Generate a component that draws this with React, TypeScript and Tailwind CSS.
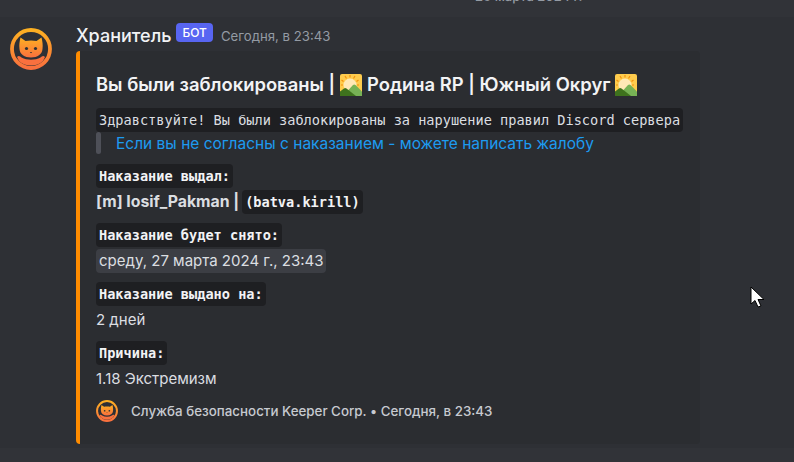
function CatAvatar({ size, id }: { size: number; id: string }) {
  return (
    <svg width={size} height={size} viewBox="0 0 42 42" className="shrink-0">
      <defs>
        <linearGradient id={id} x1="0" y1="0" x2="0" y2="1">
          <stop offset="0" stopColor="#fdb022" />
          <stop offset="1" stopColor="#f9703e" />
        </linearGradient>
      </defs>
      <circle cx="21" cy="21" r="19" fill="#2e3035" stroke={`url(#${id})`} strokeWidth="3.8" />
      <path d="M10.500 9.500 L15.500 13 C18.500 12.200 23.500 12.200 26.500 13 L31.500 9.500 C32.500 13.500 33 17 32.500 21 C32 26.500 27.500 29.500 21 29.500 C14.500 29.500 10 26.500 9.500 21 C9 17 9.500 13.500 10.500 9.500 Z" fill={`url(#${id})`} />
      <path d="M7 29 C8.500 27.500 10 28 11.500 29.500 C17 32.500 25 32.500 30.500 29.500 C32 28 33.500 27.500 35 29 L33 33 C27 39 15 39 9 33 Z" fill="#f9703e" />
      <circle cx="16.500" cy="20.500" r="1.600" fill="#2e3035" />
      <circle cx="25.500" cy="20.500" r="1.600" fill="#2e3035" />
      <path d="M19.800 24 H22.200 L21 25.300 Z" fill="#2e3035" />
    </svg>
  );
}

function SunriseEmoji() {
  return (
    <svg width="22" height="22" viewBox="0 0 22 22" className="inline-block shrink-0">
      <rect width="22" height="22" rx="2" fill="#ffcc4d" />
      <g stroke="#f4900c" strokeWidth="1.200">
        <path d="M10 1 V3.500 M5 2 L6.500 4.500 M15 2 L13.500 4.500 M1.500 6 L3.500 7.500 M18.500 6 L16.500 7.500 M1 11 H3 M19 11 H17" />
      </g>
      <circle cx="10" cy="11" r="6.500" fill="#ffe8b6" />
      <path d="M3 22 L13 11 C14 10.300 14.500 10.300 15.500 11 L22 17.500 V22 Z" fill="#77b255" />
      <path d="M0 17.500 L4 14.500 C5 13.800 5.500 13.800 6.500 14.500 L16 22 H0 Z" fill="#3e721d" />
    </svg>
  );
}

function Code({ children, bold }: { children: string; bold?: boolean }) {
  return (
    <span
      className={`inline-block h-6 whitespace-pre rounded-[4px] bg-[#1e1f22] px-[3px] font-['DejaVu_Sans_Mono',monospace] text-[13.600px] leading-6 ${bold ? 'font-bold text-[#f2f3f5]' : 'text-[#dbdee1]'}`}
    >
      {children}
    </span>
  );
}

function Field({ label, children }: { label: string; children: React.ReactNode }) {
  return (
    <div className="flex flex-col items-start">
      <Code bold>{label}</Code>
      <div className="mt-[2px] flex h-6 items-center text-[15px] text-[#dbdee1]">{children}</div>
    </div>
  );
}

export default function App() {
  return (
    <div className="relative h-[462px] w-[794px] overflow-hidden bg-[#313338] font-['Inter',sans-serif]">
      {/* верхняя полоса с датой */}
      <div className="h-[17px] pl-[475px]">
        <div className="-translate-y-[11px] text-[13px] leading-[14px] font-medium text-[#949ba4]">26 марта 2024 г.</div>
      </div>

      <div className="flex h-[431px] gap-[24px] bg-[#2e3035] pl-[10px] pt-[11px]">
        <CatAvatar size={42} id="avatar-grad" />
        <div className="flex w-[624px] flex-col">
          <div className="mb-[7px] flex h-4 items-center leading-4">
            <span className="text-[18px] font-medium text-[#f2f3f5]">Хранитель</span>
            <span className="mb-[7px] ml-[5px] flex h-[19px] items-center rounded-[4px] bg-[#5865f2] px-[6px] text-[12px] font-medium text-white">
              БОТ
            </span>
            <span className="ml-[8px] text-[13.200px] text-[#949ba4]">Сегодня, в 23:43</span>
          </div>

          <div className="flex h-[393px] overflow-hidden rounded-[4px] bg-[#2b2d31]">
            <div className="w-[4px] shrink-0 bg-[#ff8c00]" />
            <div className="flex flex-1 flex-col pl-[16px]">
              <div className="mt-[22px] flex h-[24px] items-center gap-[5px] text-[18.400px] font-semibold whitespace-nowrap text-[#f2f3f5]">
                Вы были заблокированы |
                <SunriseEmoji />
                Родина RP | Южный Округ
                <SunriseEmoji />
              </div>
              <div className="mt-[11px] flex">
                <Code>Здравствуйте! Вы были заблокированы за нарушение правил Discord сервера</Code>
              </div>
              <div className="flex h-6 items-center">
                <div className="h-[22px] w-[5px] self-start rounded-[4px] bg-[#4e5058]" />
                <span className="ml-[15px] text-[15.500px] text-[#1d9bf0]">
                  Если вы не согласны с наказанием - можете написать жалобу
                </span>
              </div>

              <div className="mt-[8px] flex flex-col gap-[9px]">
                <Field label="Наказание выдал:">
                  <span className="text-[15.800px] font-bold text-[#dbdee1]">[m] Iosif_Pakman |</span>
                  <span className="ml-[3px]">
                    <Code bold>(batva.kirill)</Code>
                  </span>
                </Field>
                <Field label="Наказание будет снято:">
                  <span className="rounded-[4px] bg-[#3c3e44] px-[3px] leading-6">среду, 27 марта 2024 г., 23:43</span>
                </Field>
                <Field label="Наказание выдано на:">2 дней</Field>
                <Field label="Причина:">1.18 Экстремизм</Field>
              </div>

              <div className="mt-[9px] flex items-center">
                <CatAvatar size={22} id="footer-grad" />
                <span className="ml-[13px] text-[13.350px] font-medium text-[#c7cad0]">
                  Служба безопасности Keeper Corp. • Сегодня, в 23:43
                </span>
              </div>
            </div>
          </div>
        </div>
      </div>

      {/* курсор */}
      <svg width="16" height="24" viewBox="0 0 16 24" className="absolute left-[750px] top-[286px]">
        <path d="M1 1 V18 L5 14.500 L8 21 L11 20 L8 13.500 H14 Z" fill="#fff" stroke="#000" strokeWidth="1" />
      </svg>
    </div>
  );
}
